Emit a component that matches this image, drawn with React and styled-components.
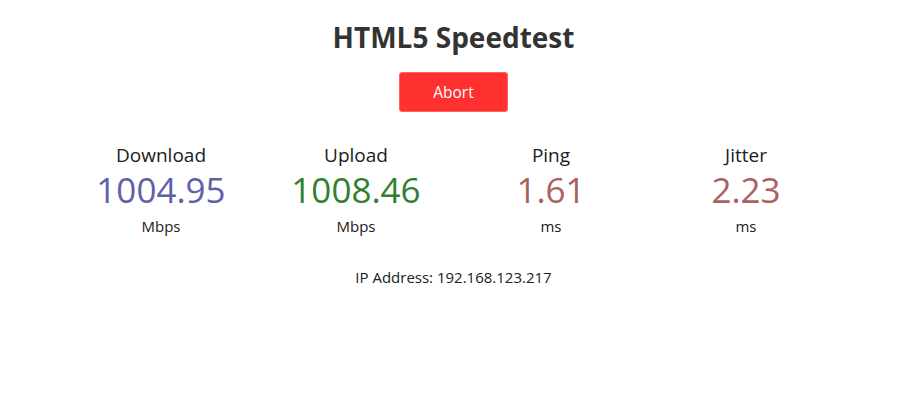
import React from "react";
import styled, { createGlobalStyle } from "styled-components";

const Global = createGlobalStyle`
  html, body { margin: 0; padding: 0; background: #fff; }
  body { font-family: "Open Sans", "Noto Sans", sans-serif; color: #202020; }
`;

const Page = styled.div`
  display: flex;
  flex-direction: column;
  align-items: center;
  padding-top: 18px;
`;

const Title = styled.h1`
  margin: 0;
  font-size: 28px;
  line-height: 38px;
  font-weight: 700;
  color: #333;
`;

const AbortButton = styled.button`
  margin-top: 16px;
  width: 109px;
  height: 40px;
  background: #ff3030;
  border: 1px solid #ff6060;
  border-radius: 3px;
  color: #fff;
  font-family: inherit;
  font-size: 15.5px;
  padding: 0;
`;

const Meters = styled.div`
  display: flex;
  justify-content: center;
  margin-top: 29px;
`;

const Meter = styled.div`
  width: 195px;
  display: flex;
  flex-direction: column;
  align-items: center;
`;

const Label = styled.div`
  font-size: 19px;
  line-height: 28px;
  color: #202020;
`;

const Value = styled.div`
  font-size: 35px;
  line-height: 42px;
  color: ${(p) => p.$color};
`;

const Unit = styled.div`
  font-size: 15px;
  line-height: 22px;
  margin-top: 4px;
  color: #202020;
`;

const Ip = styled.div`
  margin-top: 29px;
  font-size: 15px;
  line-height: 22px;
  color: #202020;
`;

const meters = [
  { label: "Download", value: "1004.95", unit: "Mbps", color: "#6060AA" },
  { label: "Upload", value: "1008.46", unit: "Mbps", color: "#308030" },
  { label: "Ping", value: "1.61", unit: "ms", color: "#AA6060" },
  { label: "Jitter", value: "2.23", unit: "ms", color: "#AA6060" },
];

export default function App() {
  return (
    <>
      <Global />
      <Page>
        <Title>HTML5 Speedtest</Title>
        <AbortButton>Abort</AbortButton>
        <Meters>
          {meters.map((m) => (
            <Meter key={m.label}>
              <Label>{m.label}</Label>
              <Value $color={m.color}>{m.value}</Value>
              <Unit>{m.unit}</Unit>
            </Meter>
          ))}
        </Meters>
        <Ip>IP Address: 192.168.123.217</Ip>
      </Page>
    </>
  );
}
